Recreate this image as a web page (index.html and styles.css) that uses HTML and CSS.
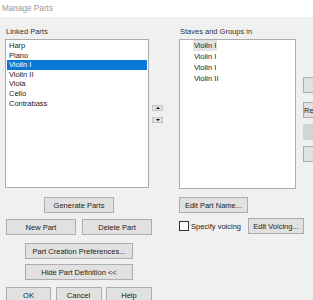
FILE: index.html
```html
<!DOCTYPE html>
<html lang="en">
<head>
    <meta charset="UTF-8">
    <meta name="viewport" content="width=device-width, initial-scale=1.0">
    <title>Manage Parts</title>
    <link rel="stylesheet" href="styles.css">
</head>
<body>

    <div class="titlebar">Manage Parts</div>

    <div class="dialog">
        <!-- Lists -->
        <div class="top">
            <div class="pane pane-left">
                <div class="label">Linked Parts</div>
                <ul class="listbox list-parts">
                    <li>Harp</li>
                    <li>Piano</li>
                    <li class="selected">Violin I</li>
                    <li>Violin II</li>
                    <li>Viola</li>
                    <li>Cello</li>
                    <li>Contrabass</li>
                </ul>
            </div>

            <div class="arrows">
                <button class="arrow arrow-up"></button>
                <button class="arrow arrow-down"></button>
            </div>

            <div class="pane pane-right">
                <div class="label">Staves and Groups in</div>
                <ul class="listbox list-staves">
                    <li><span class="focus">Violin I</span></li>
                    <li><span>Violin I</span></li>
                    <li><span>Violin I</span></li>
                    <li><span>Violin II</span></li>
                </ul>
            </div>

            <div class="side">
                <button class="btn side-btn"></button>
                <button class="btn side-btn side-text">Remove</button>
                <button class="btn side-btn" disabled></button>
                <button class="btn side-btn"></button>
            </div>
        </div>

        <!-- Buttons -->
        <div class="bottom">
            <div class="col-left">
                <button class="btn btn-generate">Generate Parts</button>
                <div class="row row-parts">
                    <button class="btn btn-half">New Part</button>
                    <button class="btn btn-half">Delete Part</button>
                </div>
                <button class="btn btn-wide btn-prefs">Part Creation Preferences...</button>
                <button class="btn btn-wide btn-hide">Hide Part Definition &lt;&lt;</button>
                <div class="row row-dialog">
                    <button class="btn btn-ok">OK</button>
                    <button class="btn btn-third">Cancel</button>
                    <button class="btn btn-third">Help</button>
                </div>
            </div>

            <div class="col-right">
                <button class="btn btn-name">Edit Part Name...</button>
                <div class="row row-voicing">
                    <label class="check">
                        <span class="box"></span>
                        Specify voicing
                    </label>
                    <button class="btn btn-voicing">Edit Voicing...</button>
                </div>
            </div>
        </div>
    </div>

</body>
</html>
```

FILE: styles.css
```css
/* General Styles */
body {
    font-family: "Liberation Sans", Arial, sans-serif;
    font-size: 7.5px;
    color: #222;
    background-color: #f0f0f0;
    margin: 0;
    width: 313px;
    height: 300px;
    overflow: hidden;
}

.titlebar {
    height: 17px;
    line-height: 17px;
    padding-left: 2px;
    background-color: #fff;
    color: #9a9a9a;
    font-size: 8.2px;
}

.dialog {
    padding: 10px 0 0 5px;
}

.top {
    display: flex;
    align-items: flex-start;
}

.top > * {
    flex-shrink: 0;
}

.label {
    height: 12px;
    line-height: 10px;
    padding-left: 1px;
    color: #333;
}

/* List boxes */
.listbox {
    list-style: none;
    margin: 0;
    padding: 1px;
    color: #222;
    background-color: #fff;
    border: 1px solid #adadad;
    box-sizing: border-box;
}

.pane-left {
    width: 144px;
}

.list-parts {
    height: 149px;
}

.list-parts li {
    height: 9.6px;
    line-height: 9.6px;
    padding-left: 2px;
}

.list-parts li.selected {
    background-color: #0a78d7;
    color: #fff;
}

.arrows {
    display: flex;
    flex-direction: column;
    gap: 6px;
    margin-left: 3px;
    padding-top: 78px;
}

.arrow {
    position: relative;
    width: 11px;
    height: 6px;
    padding: 0;
    background-color: #e1e1e1;
    border: 1px solid #c4c4c4;
    box-sizing: border-box;
}

.arrow::after {
    content: "";
    position: absolute;
    left: 3px;
    top: 1px;
    border-left: 2px solid transparent;
    border-right: 2px solid transparent;
}

.arrow-up::after {
    border-bottom: 2px solid #000;
}

.arrow-down::after {
    border-top: 2px solid #000;
}

.pane-right {
    width: 117px;
    margin-left: 16px;
}

.list-staves {
    height: 150px;
    padding-left: 13px;
    padding-top: 0;
}

.list-staves li {
    height: 11px;
    line-height: 11px;
    color: #222;
}

.list-staves span {
    padding: 1px 1px;
}

.list-staves span.focus {
    background-color: #e3e3e3;
}

.side {
    display: flex;
    flex-direction: column;
    gap: 6px;
    margin-left: 7px;
    padding-top: 50px;
}

.side-btn {
    width: 60px;
}

.side-btn:first-child {
    margin-bottom: 3px;
}

.side-text {
    text-align: left;
    padding-left: 3px;
}

/* Buttons */
.btn {
    height: 16px;
    padding: 0;
    font-family: inherit;
    font-size: 7.5px;
    color: #222;
    background-color: #e1e1e1;
    border: 1px solid #adadad;
    box-sizing: border-box;
}

.btn:disabled {
    background-color: #d4d4d4;
    border-color: #d4d4d4;
}

.bottom {
    display: flex;
    margin-top: 8px;
}

.bottom > * {
    flex-shrink: 0;
}

.col-left {
    display: flex;
    flex-direction: column;
    align-items: center;
    width: 146px;
    margin-left: 1px;
}

.row {
    display: flex;
}

.btn-generate {
    width: 70px;
}

.row-parts {
    width: 100%;
    justify-content: space-between;
    margin-top: 6px;
}

.btn-half {
    width: 70px;
}

.btn-wide {
    width: 108px;
}

.btn-prefs {
    margin-top: 8px;
}

.btn-hide {
    margin-top: 5px;
}

.row-dialog {
    width: 100%;
    justify-content: space-between;
    margin-top: 7px;
}

.btn-ok {
    width: 45px;
}

.btn-third {
    width: 46px;
}

.col-right {
    margin-left: 27px;
}

.btn-name {
    width: 69px;
}

.row-voicing {
    width: 125px;
    justify-content: space-between;
    align-items: center;
    margin-top: 5px;
}

.check {
    display: flex;
    align-items: center;
    gap: 2px;
    color: #222;
}

.box {
    width: 10px;
    height: 10px;
    background-color: #fff;
    border: 1px solid #333;
    box-sizing: border-box;
}

.btn-voicing {
    width: 56px;
}
```
